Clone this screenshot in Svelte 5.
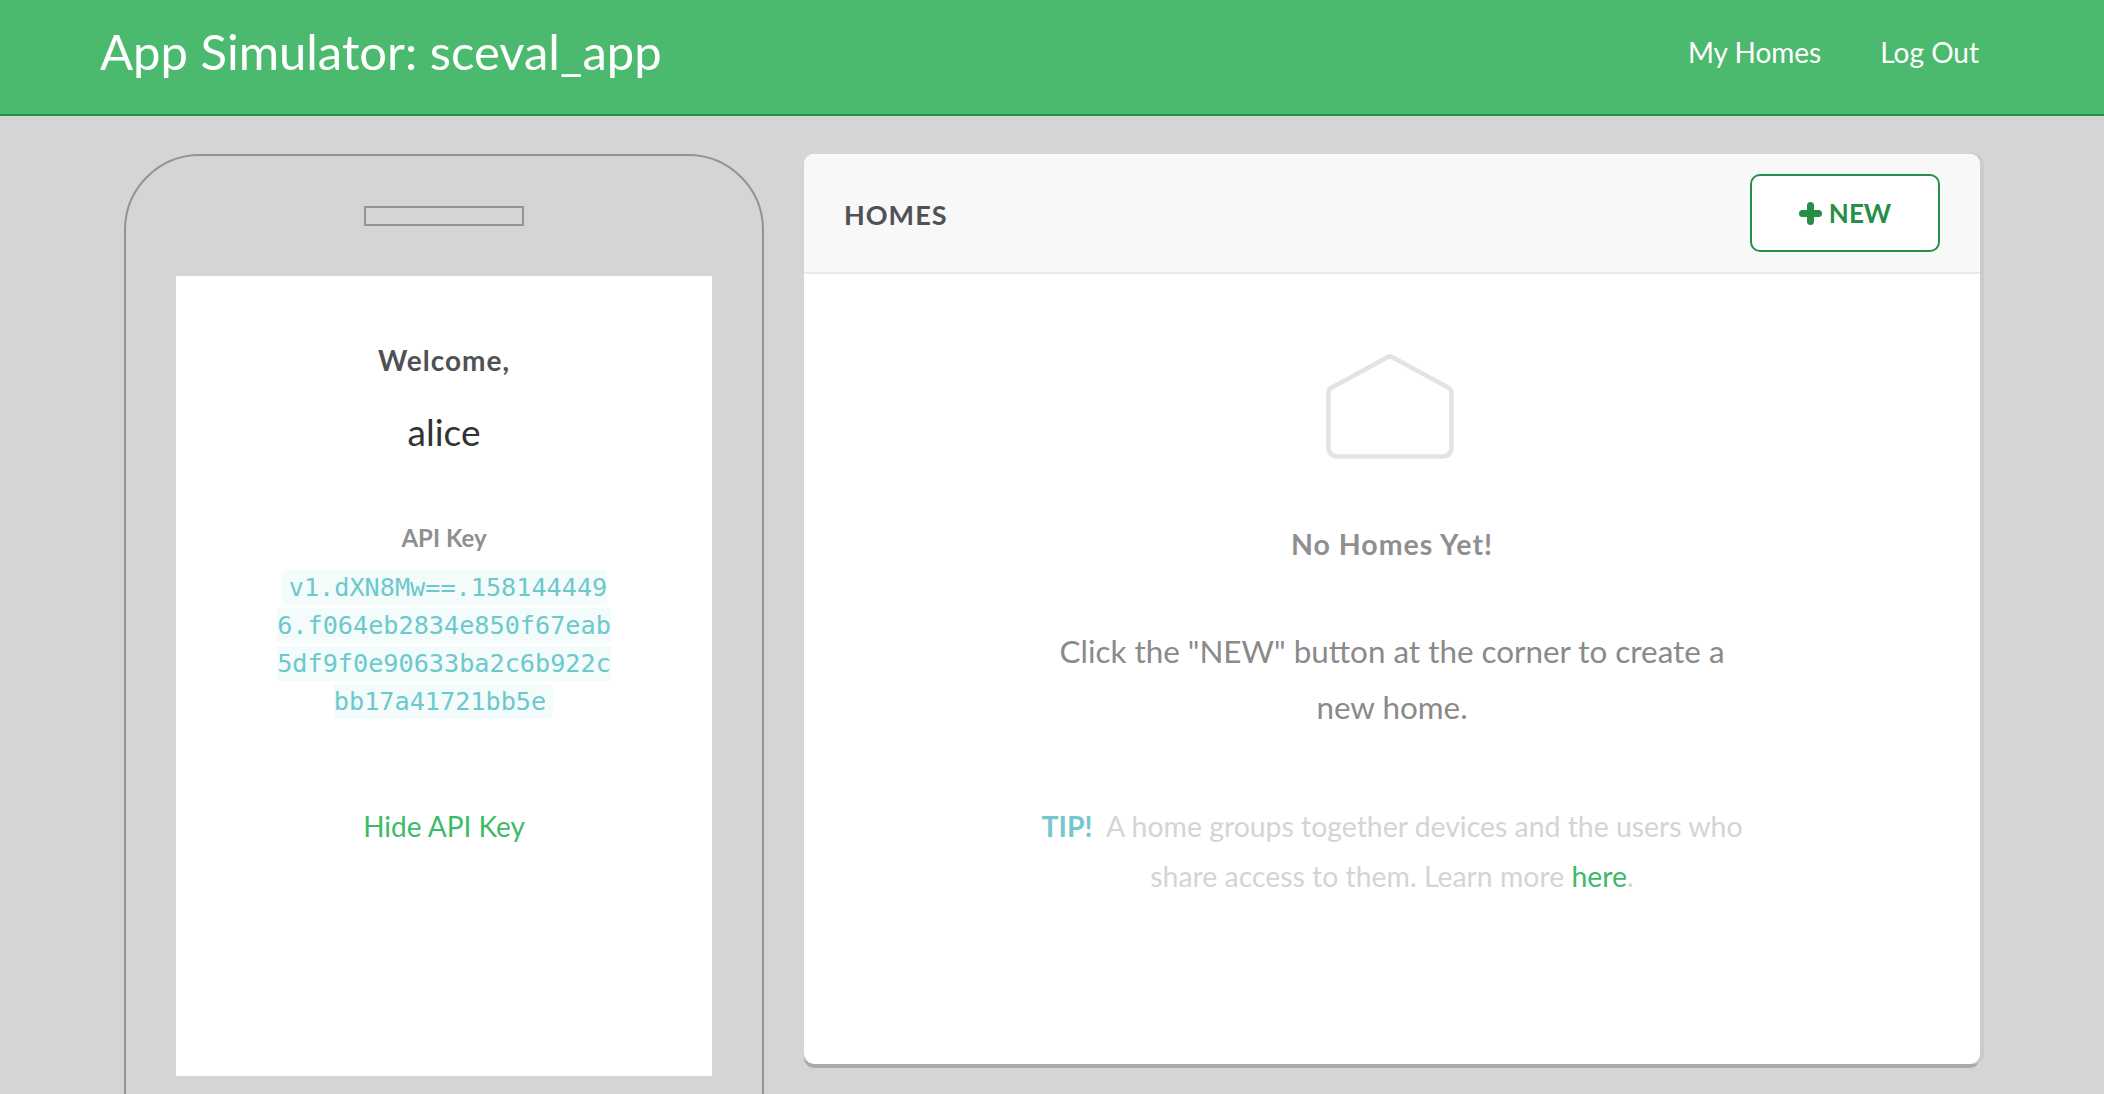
<script>
  const apiKey = "v1.dXN8Mw==.1581444496.f064eb2834e850f67eab5df9f0e90633ba2c6b922cbb17a41721bb5e";
</script>

<div class="page">
  <header class="topbar">
    <h1>App Simulator: sceval_app</h1>
    <nav>
      <a href="#homes">My Homes</a>
      <a href="#logout">Log Out</a>
    </nav>
  </header>

  <main class="content">
    <section class="phone">
      <div class="speaker"></div>
      <div class="screen">
        <div class="welcome">Welcome,</div>
        <div class="user">alice</div>
        <div class="key-label">API Key</div>
        <div class="key"><code>{apiKey}</code></div>
        <a class="hide" href="#hide">Hide API Key</a>
      </div>
    </section>

    <section class="card">
      <div class="card-head">
        <h2>HOMES</h2>
        <button type="button">
          <svg viewBox="0 0 23 23" width="23" height="23" aria-hidden="true">
            <path d="M11.5 3.5 V19.5 M3.5 11.5 H19.5" fill="none" stroke="#278e47" stroke-width="7" stroke-linecap="round"/>
          </svg>
          NEW
        </button>
      </div>
      <div class="card-body">
        <svg class="home" viewBox="0 0 128 105" width="128" height="105" aria-hidden="true">
          <path d="M61 3.5 Q64 1.5 67 3.5 L123 34 Q125.5 35.5 125.5 39 V93 Q125.5 102.5 116 102.5 H12 Q2.5 102.5 2.5 93 V39 Q2.5 35.5 5 34 Z" fill="none" stroke="#e3e3e3" stroke-width="4.5" stroke-linejoin="round"/>
        </svg>
        <h3>No Homes Yet!</h3>
        <p class="lead">Click the "NEW" button at the corner to create a new home.</p>
        <p class="tip"><b>TIP!</b>&nbsp; A home groups together devices and the users who share access to them. Learn more <a href="#here">here</a>.</p>
      </div>
    </section>
  </main>
</div>

<style>
  :global(body) {
    margin: 0;
    background: #d5d5d5;
    font-family: "Lato", "Liberation Sans", sans-serif;
  }
  .page {
    height: 1094px;
    overflow: hidden;
    background: #d5d5d5;
  }
  .topbar {
    box-sizing: border-box;
    height: 116px;
    background: #4cba6e;
    border-bottom: 2px solid #278e47;
    display: flex;
    align-items: center;
    justify-content: space-between;
    padding: 0 125px 0 100px;
    color: #fff;
  }
  h1 {
    margin: 0 0 12px;
    font-size: 49px;
    font-weight: 400;
    line-height: 1;
  }
  nav {
    display: flex;
    gap: 59px;
    margin-bottom: 10px;
  }
  nav a {
    color: #fff;
    text-decoration: none;
    font-size: 28px;
  }
  .content {
    display: flex;
    align-items: flex-start;
    padding: 38px 0 0 124px;
    gap: 40px;
  }
  .phone {
    box-sizing: border-box;
    flex: none;
    width: 640px;
    height: 1100px;
    border: 2px solid #939393;
    border-radius: 76px 76px 0 0;
    padding-top: 50px;
  }
  .speaker {
    box-sizing: border-box;
    width: 160px;
    height: 20px;
    margin: 0 auto 50px;
    border: 2px solid #939393;
  }
  .screen {
    box-sizing: border-box;
    width: 536px;
    height: 800px;
    margin: 0 auto;
    background: #fff;
    padding: 67px 100px 0;
    text-align: center;
  }
  .welcome {
    font-size: 28px;
    font-weight: 700;
    letter-spacing: 1px;
    color: #4f5156;
    line-height: 34px;
  }
  .user {
    margin-top: 34px;
    font-size: 37px;
    color: #333;
    line-height: 42px;
  }
  .key-label {
    margin-top: 70px;
    font-size: 24px;
    font-weight: 700;
    color: #8f8f8f;
    line-height: 30px;
  }
  .key {
    margin-top: 16px;
    line-height: 38px;
    font-family: "DejaVu Sans Mono", monospace;
    font-size: 25.2px;
  }
  code {
    font-family: inherit;
    font-size: inherit;
    color: #6bc9ce;
    background: #f3fbfb;
    padding: 3px 8px;
    border-radius: 8px;
    word-break: break-all;
  }
  .hide {
    display: block;
    margin-top: 87px;
    color: #3dba68;
    font-size: 28px;
    text-decoration: none;
    line-height: 36px;
  }
  .card {
    box-sizing: border-box;
    flex: none;
    width: 1176px;
    height: 910px;
    background: #fff;
    border-radius: 10px;
    box-shadow: 4px 0 0 #cbcbcb, 0 4px 0 #aaa;
    overflow: hidden;
  }
  .card-head {
    box-sizing: border-box;
    height: 120px;
    background: #f8f8f8;
    border-bottom: 2px solid #e8e8e8;
    display: flex;
    align-items: center;
    justify-content: space-between;
    padding: 0 40px;
  }
  h2 {
    margin: 2px 0 0;
    font-size: 27px;
    font-weight: 700;
    letter-spacing: 1px;
    color: #4f5156;
  }
  button {
    box-sizing: border-box;
    width: 190px;
    height: 78px;
    background: #fff;
    border: 2px solid #278e47;
    border-radius: 10px;
    color: #278e47;
    font: 700 26px "Lato", sans-serif;
    display: flex;
    align-items: center;
    justify-content: center;
    gap: 7px;
  }
  .card-body {
    text-align: center;
    padding: 80px 120px 0;
  }
  .home {
    display: block;
    margin: 0 auto;
    position: relative;
    left: -2px;
  }
  h3 {
    margin: 68px 0 0;
    font-size: 28.5px;
    font-weight: 700;
    letter-spacing: 1px;
    color: #8f8f8f;
    line-height: 34px;
  }
  .lead {
    margin: 62px auto 0;
    width: 700px;
    font-size: 31.4px;
    line-height: 56px;
    color: #8a8a8a;
  }
  .tip {
    margin: 66px auto 0;
    width: 760px;
    font-size: 28.4px;
    line-height: 50px;
    color: #d4d4d4;
  }
  .tip b {
    color: #74c7cf;
  }
  .tip a {
    color: #3dba68;
    text-decoration: none;
  }
</style>
